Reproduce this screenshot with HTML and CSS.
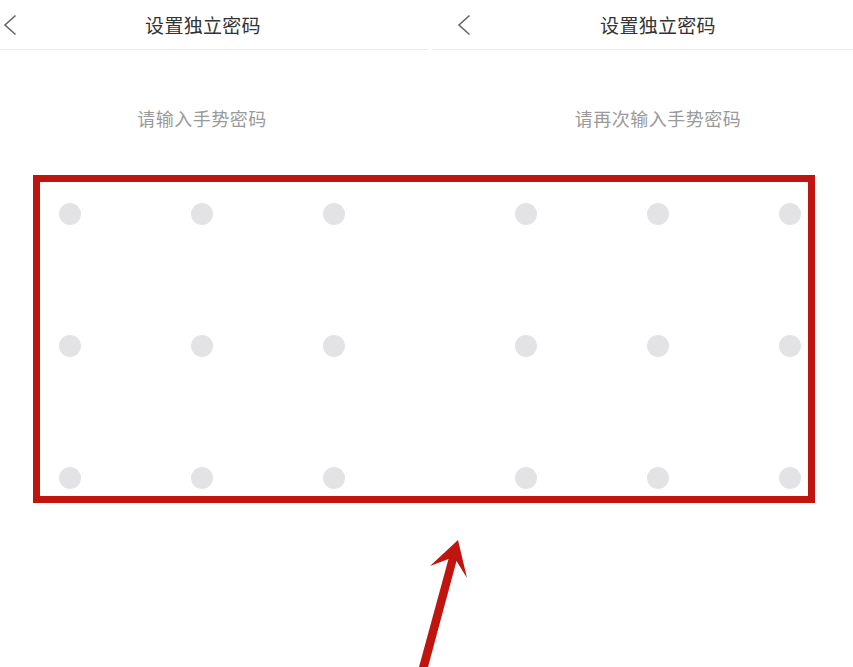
FILE: index.html
```html
<!DOCTYPE html>
<html lang="zh">
<head>
<meta charset="utf-8">
<link rel="stylesheet" href="styles.css">
</head>
<body>
<div class="stage">
  <section class="screen screen-first">
    <header class="bar">
      <svg class="back" width="14" height="22" viewBox="0 0 14 22"><path d="M12.5 1.5 L2 11 L12.5 20.5" fill="none" stroke="#666" stroke-width="1.6"/></svg>
      <h1 class="title">设置独立密码</h1>
    </header>
    <p class="hint">请输入手势密码</p>
    <div class="grid">
      <span class="dot"></span><span class="dot"></span><span class="dot"></span>
      <span class="dot"></span><span class="dot"></span><span class="dot"></span>
      <span class="dot"></span><span class="dot"></span><span class="dot"></span>
    </div>
  </section>
  <section class="screen screen-second">
    <header class="bar">
      <svg class="back" width="14" height="22" viewBox="0 0 14 22"><path d="M12.5 1.5 L2 11 L12.5 20.5" fill="none" stroke="#666" stroke-width="1.6"/></svg>
      <h1 class="title">设置独立密码</h1>
    </header>
    <p class="hint">请再次输入手势密码</p>
    <div class="grid">
      <span class="dot"></span><span class="dot"></span><span class="dot"></span>
      <span class="dot"></span><span class="dot"></span><span class="dot"></span>
      <span class="dot"></span><span class="dot"></span><span class="dot"></span>
    </div>
  </section>
  <div class="highlight"></div>
  <svg class="arrow" width="853" height="667" viewBox="0 0 853 667">
    <polygon points="458,540 467,578 456.5,561 428,667 419,667 448.5,559 430,566" fill="#c0150f"/>
  </svg>
</div>
</body>
</html>
```
FILE: styles.css
```css
html, body {
  margin: 0;
  padding: 0;
  background: #ffffff;
}
body {
  width: 853px;
  height: 667px;
  overflow: hidden;
  font-family: "Noto Sans CJK SC", "Noto Sans", sans-serif;
}
.stage {
  position: relative;
  width: 853px;
  height: 667px;
  overflow: hidden;
  display: flex;
}
.screen {
  flex: none;
  display: flex;
  flex-direction: column;
}
.screen-first {
  width: 454px;
  margin-left: -22px;
}
.screen-second {
  width: 452px;
}
.bar {
  position: relative;
  height: 49px;
  display: flex;
  align-items: center;
  justify-content: center;
  border-bottom: 1px solid #e9e9e9;
}
.screen-first .bar {
  margin-right: 4px;
  margin-left: 22px;
}
.back {
  position: absolute;
  left: 3px;
  top: 14px;
}
.screen-second .back {
  left: 25px;
}
.screen-first .title {
  margin-left: -22px;
}
.title {
  margin: 0;
  font-size: 19px;
  font-weight: 400;
  color: #333333;
  letter-spacing: 0.3px;
}
.hint {
  margin: 55px 0 0;
  height: 26px;
  line-height: 26px;
  text-align: center;
  font-size: 18px;
  color: #9a9a9a;
  letter-spacing: 0.5px;
}
.screen-first .hint {
  padding-right: 6px;
}
.grid {
  margin: 72px 0 0 81px;
  display: grid;
  grid-template-columns: repeat(3, 22px);
  grid-auto-rows: 22px;
  column-gap: 110px;
  row-gap: 110px;
}
.screen-second .grid {
  margin-left: 83px;
}
.dot {
  width: 22px;
  height: 22px;
  border-radius: 50%;
  background: #e3e3e5;
}
.highlight {
  position: absolute;
  left: 33px;
  top: 175px;
  width: 782px;
  height: 328px;
  box-sizing: border-box;
  border: 7px solid #c0150f;
}
.arrow {
  position: absolute;
  left: 0;
  top: 0;
}
```
